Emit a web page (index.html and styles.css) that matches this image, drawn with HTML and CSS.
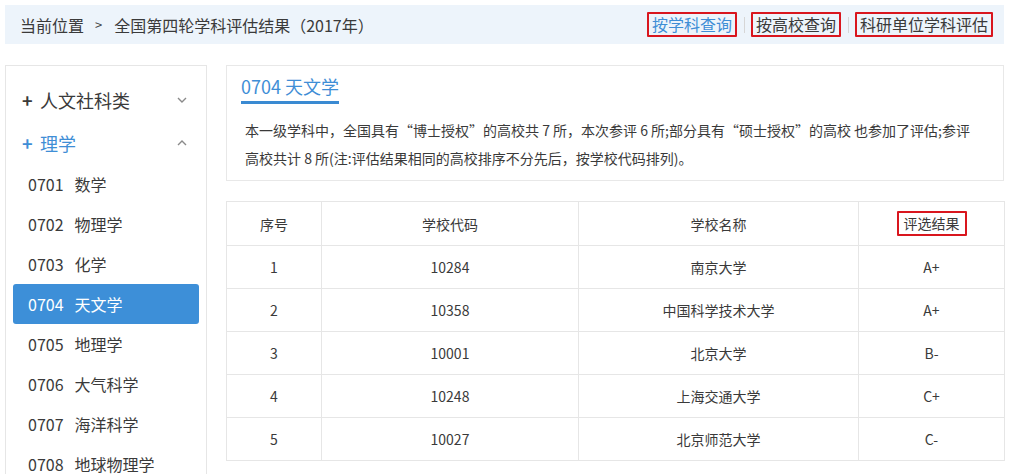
FILE: index.html
```html
<!DOCTYPE html>
<html lang="zh-CN">
<head>
<meta charset="utf-8">
<title>全国第四轮学科评估结果（2017年）</title>
<link rel="stylesheet" href="styles.css">
</head>
<body>
<div class="page">
  <div class="topbar">
    <div class="crumb"><span>当前位置</span><span class="arrow">&gt;</span><span>全国第四轮学科评估结果（2017年）</span></div>
    <div class="links">
      <a class="link active">按学科查询</a>
      <span class="sep"></span>
      <a class="link">按高校查询</a>
      <span class="sep"></span>
      <a class="link">科研单位学科评估</a>
    </div>
  </div>
  <div class="main">
    <aside class="sidebar">
      <div class="cat">
        <span class="plus">+</span><span class="cat-name">人文社科类</span>
        <svg class="chev" width="10" height="6" viewBox="0 0 10 6"><polyline points="1,1 5,5 9,1" fill="none" stroke="#8a8a8a" stroke-width="1.4"/></svg>
      </div>
      <div class="cat open">
        <span class="plus">+</span><span class="cat-name">理学</span>
        <svg class="chev" width="10" height="6" viewBox="0 0 10 6"><polyline points="1,5 5,1 9,5" fill="none" stroke="#8a8a8a" stroke-width="1.4"/></svg>
      </div>
      <ul class="items">
        <li class="item"><span class="code">0701</span>数学</li>
        <li class="item"><span class="code">0702</span>物理学</li>
        <li class="item"><span class="code">0703</span>化学</li>
        <li class="item current"><span class="code">0704</span>天文学</li>
        <li class="item"><span class="code">0705</span>地理学</li>
        <li class="item"><span class="code">0706</span>大气科学</li>
        <li class="item"><span class="code">0707</span>海洋科学</li>
        <li class="item"><span class="code">0708</span>地球物理学</li>
      </ul>
    </aside>
    <section class="content">
      <div class="info">
        <h2 class="title">0704 天文学</h2>
        <p class="desc"><span class="line">本一级学科中，全国具有“博士授权”的高校共 7 所，本次参评 6 所;部分具有“硕士授权”的高校 也参加了评估;参评</span><span class="line">高校共计 8 所(注:评估结果相同的高校排序不分先后，按学校代码排列)。</span></p>
      </div>
      <table class="result">
        <colgroup><col class="c1"><col class="c2"><col class="c3"><col class="c4"></colgroup>
        <thead>
          <tr><th>序号</th><th>学校代码</th><th>学校名称</th><th><span class="mark">评选结果</span></th></tr>
        </thead>
        <tbody>
          <tr><td>1</td><td>10284</td><td>南京大学</td><td>A+</td></tr>
          <tr><td>2</td><td>10358</td><td>中国科学技术大学</td><td>A+</td></tr>
          <tr><td>3</td><td>10001</td><td>北京大学</td><td>B-</td></tr>
          <tr><td>4</td><td>10248</td><td>上海交通大学</td><td>C+</td></tr>
          <tr><td>5</td><td>10027</td><td>北京师范大学</td><td>C-</td></tr>
        </tbody>
      </table>
    </section>
  </div>
</div>
</body>
</html>
```
FILE: styles.css
```css
* { box-sizing: border-box; }
body {
  margin: 0;
  background: #fff;
  color: #3a3a3a;
  font-family: "Noto Sans CJK SC", "Noto Sans", sans-serif;
}
.page { padding: 5px 9px 0 5px; }

.topbar {
  height: 39px;
  background: #edf4fb;
  display: flex;
  align-items: center;
  justify-content: space-between;
  padding: 0 11px 0 15px;
}
.crumb { font-size: 16px; line-height: 22px; color: #3a3a3a; display: flex; align-items: center; }
.crumb .arrow { font-size: 13px; margin: 0 12px 0 11px; color: #444; }
.links { display: flex; align-items: center; }
.link {
  font-size: 16px;
  line-height: 21px;
  padding: 0 3px;
  border: 2px solid #d9161e;
  border-radius: 1px;
  color: #3a3a3a;
  text-decoration: none;
}
.link.active { color: #3f8ed6; }
.sep { width: 1px; height: 16px; background: #d6d6d6; margin: 0 6px 0 7px; }

.main { display: flex; gap: 19px; margin-top: 21px; }

.sidebar {
  width: 202px;
  flex: none;
  border: 1px solid #e6e6e6;
  border-bottom: none;
  padding: 12px 7px 0 7px;
  min-height: 420px;
}
.cat {
  height: 43px;
  display: flex;
  align-items: center;
  padding: 0 12px 0 9px;
  font-size: 18px;
  color: #3a3a3a;
}
.cat .plus { width: 18px; font-weight: 700; font-size: 18px; }
.cat .cat-name { flex: 1; }
.cat.open { color: #3f8ed6; }
.items { list-style: none; margin: 0; padding: 0; }
.item {
  height: 40px;
  line-height: 40px;
  padding-left: 15px;
  font-size: 16px;
  color: #3a3a3a;
  border-radius: 3px;
}
.item .code { margin-right: 11px; }
.item.current { background: #3d8fd8; color: #fff; }

.content { flex: 1; min-width: 0; }
.info {
  border: 1px solid #e8e8e8;
  padding: 8px 14px 8px 14px;
}
.title {
  display: inline-block;
  margin: 0;
  font-weight: 400;
  font-size: 18px;
  line-height: 24px;
  color: #3f8ed6;
  padding-bottom: 3px;
  border-bottom: 3px solid #3a8ad2;
}
.desc {
  margin: 12px 0 0 0;
  padding-left: 4px;
  font-size: 14px;
  line-height: 28px;
  color: #3a3a3a;
}
.desc .line { display: block; white-space: nowrap; }

.result {
  margin-top: 20px;
  width: 100%;
  border-collapse: collapse;
  table-layout: fixed;
  font-size: 14px;
  color: #3a3a3a;
}
.result col.c1 { width: 95px; }
.result col.c2 { width: 257px; }
.result col.c3 { width: 280px; }
.result col.c4 { width: 146px; }
.result th, .result td {
  border: 1px solid #e6e6e6;
  text-align: center;
  font-weight: 400;
  padding: 0;
}
.result thead tr { height: 44px; }
.result tbody tr { height: 43px; }
.mark {
  display: inline-block;
  border: 2px solid #d9161e;
  border-radius: 1px;
  padding: 0 5px;
  line-height: 21px;
}
```
